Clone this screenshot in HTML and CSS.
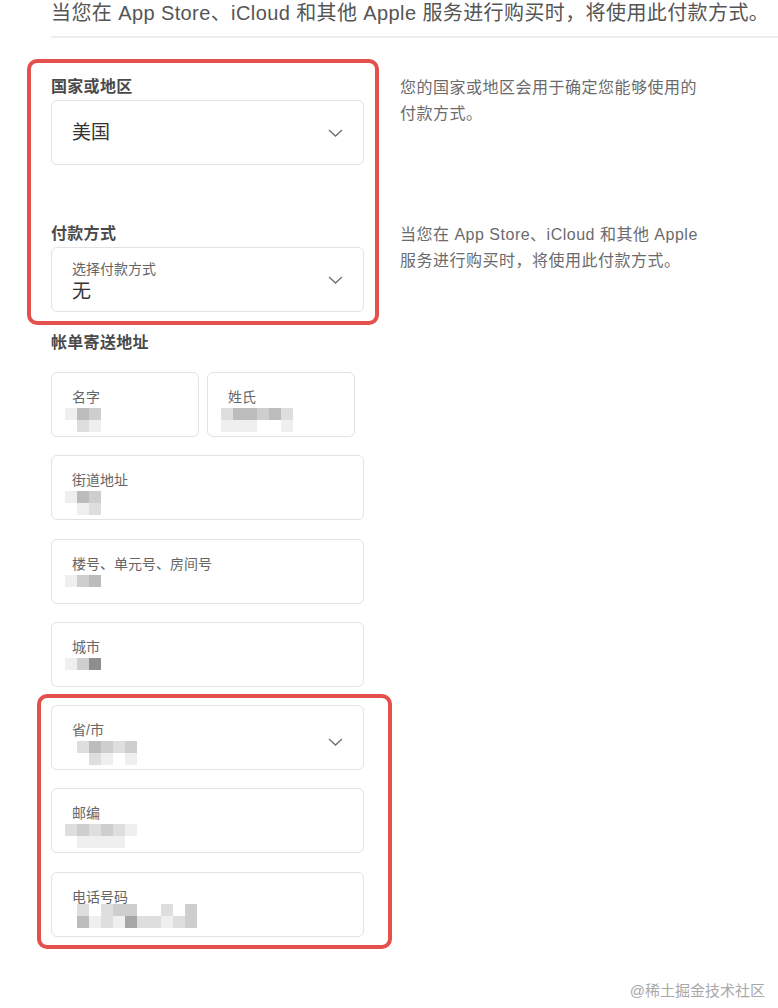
FILE: index.html
```html
<!DOCTYPE html>
<html>
<head>
  <meta charset="utf-8">
  <title>付款方式</title>
  <link rel="stylesheet" href="styles.css">
</head>
<body>
  <div class="page">
    <p class="intro">当您在 App Store、iCloud 和其他 Apple 服务进行购买时，将使用此付款方式。</p>
    <hr class="rule">

    <div class="pair">
      <div class="field-col">
        <h3 class="label">国家或地区</h3>
        <div class="box select">
          <span class="value-lg">美国</span>
          <svg class="chev" width="15" height="8" viewBox="0 0 15 8"><polyline points="1,1 7.5,7 14,1"/></svg>
        </div>
      </div>
      <p class="note">您的国家或地区会用于确定您能够使用的付款方式。</p>
    </div>

    <div class="pair pay">
      <div class="field-col">
        <h3 class="label">付款方式</h3>
        <div class="box select">
          <div class="stack">
            <span class="small">选择付款方式</span>
            <span class="value-lg">无</span>
          </div>
          <svg class="chev" width="15" height="8" viewBox="0 0 15 8"><polyline points="1,1 7.5,7 14,1"/></svg>
        </div>
      </div>
      <p class="note">当您在 App Store、iCloud 和其他 Apple 服务进行购买时，将使用此付款方式。</p>
    </div>

    <h3 class="label billing">帐单寄送地址</h3>
    <div class="fields">
      <div class="name-row">
        <div class="box input">
          <span class="small">名字</span>
          <div class="mosaic">
            <div class="mrow"><i class="c1"></i><i class="c4"></i><i class="c3"></i></div>
            <div class="mrow"><i></i><i class="c2"></i><i class="c1"></i></div>
          </div>
        </div>
        <div class="box input">
          <span class="small">姓氏</span>
          <div class="mosaic">
            <div class="mrow"><i class="c2"></i><i class="c4"></i><i class="c4"></i><i class="c3"></i><i class="c4"></i><i class="c2"></i></div>
            <div class="mrow"><i class="c1"></i><i class="c1"></i><i class="c1"></i><i></i><i></i><i class="c1"></i></div>
          </div>
        </div>
      </div>

      <div class="box input">
        <span class="small">街道地址</span>
        <div class="mosaic">
          <div class="mrow"><i class="c1"></i><i class="c4"></i><i class="c3"></i></div>
          <div class="mrow"><i></i><i class="c1"></i><i class="c2"></i></div>
        </div>
      </div>

      <div class="box input">
        <span class="small">楼号、单元号、房间号</span>
        <div class="mosaic">
          <div class="mrow"><i class="c1"></i><i class="c3"></i><i class="c4"></i></div>
        </div>
      </div>

      <div class="box input">
        <span class="small">城市</span>
        <div class="mosaic">
          <div class="mrow"><i class="c1"></i><i class="c3"></i><i class="c6"></i></div>
        </div>
      </div>

      <div class="box input has-chev">
        <div class="stack">
          <span class="small">省/市</span>
          <div class="mosaic">
            <div class="mrow"><i></i><i class="c2"></i><i class="c4"></i><i class="c3"></i><i class="c2"></i><i class="c3"></i></div>
            <div class="mrow"><i></i><i></i><i class="c2"></i><i class="c1"></i><i></i><i class="c1"></i></div>
          </div>
        </div>
        <svg class="chev" width="15" height="8" viewBox="0 0 15 8"><polyline points="1,1 7.5,7 14,1"/></svg>
      </div>

      <div class="box input">
        <span class="small">邮编</span>
        <div class="mosaic">
          <div class="mrow"><i class="c2"></i><i class="c3"></i><i class="c2"></i><i class="c3"></i><i class="c2"></i><i class="c1"></i></div>
          <div class="mrow"><i></i><i class="c1"></i><i class="c1"></i><i class="c1"></i><i class="c1"></i></div>
        </div>
      </div>

      <div class="box input">
        <span class="small">电话号码</span>
        <div class="mosaic tight">
          <div class="mrow"><i></i><i class="c2"></i><i></i><i class="c2"></i><i class="c3"></i><i class="c3"></i><i></i><i></i><i class="c2"></i><i></i><i class="c3"></i></div>
          <div class="mrow"><i></i><i class="c4"></i><i class="c1"></i><i class="c2"></i><i class="c1"></i><i class="c5"></i><i class="c2"></i><i class="c2"></i><i class="c1"></i><i class="c2"></i><i class="c3"></i></div>
        </div>
      </div>
    </div>

    <div class="watermark">@稀土掘金技术社区</div>

    <!-- annotation outlines drawn over the form -->
    <div class="mark mark-top"></div>
    <div class="mark mark-bottom"></div>
  </div>
</body>
</html>
```

FILE: styles.css
```css
body {
  margin: 0;
  background-color: #ffffff;
  font-family: 'Liberation Sans', 'Noto Sans CJK SC', sans-serif;
  color: #333333;
}
.page {
  position: relative;
  padding-left: 51px;
  height: 1008px;
  overflow: hidden;
}
.intro {
  margin: 0;
  font-size: 20px;
  line-height: 26px;
  letter-spacing: 0.4px;
  color: #555555;
  white-space: nowrap;
}
.rule {
  margin: 10px 0 0 0;
  height: 2px;
  border: none;
  background-color: #ededed;
}
.pair {
  display: flex;
  align-items: flex-start;
  gap: 36px;
  margin-top: 39px;
}
.pair.pay {
  margin-top: 59px;
}
.field-col {
  width: 313px;
}
.label {
  margin: 0 0 3px 0;
  font-size: 16px;
  line-height: 20px;
  font-weight: 700;
  letter-spacing: 0.3px;
  color: #4a4a4a;
}
.label.billing {
  margin-top: 21px;
  margin-bottom: 19px;
}
.note {
  width: 305px;
  margin: -2px 0 0 0;
  font-size: 16px;
  line-height: 25.5px;
  letter-spacing: 0.5px;
  color: #6b6b6b;
}
.box {
  box-sizing: border-box;
  height: 65px;
  border: 1px solid #e2e2e2;
  border-radius: 6px;
  background-color: #ffffff;
}
.select {
  display: flex;
  align-items: center;
  justify-content: space-between;
  padding: 0 20px;
}
.stack {
  display: flex;
  flex-direction: column;
}
.select .stack {
  gap: 3px;
  margin-top: 3px;
}
.value-lg {
  font-size: 19px;
  line-height: 22px;
  color: #333333;
}
.small {
  font-size: 14px;
  line-height: 18px;
  color: #666666;
}
.chev {
  flex: none;
}
.chev polyline {
  fill: none;
  stroke: #6e6e6e;
  stroke-width: 1.3;
}
.fields {
  display: flex;
  flex-direction: column;
  gap: 18.3px;
  width: 313px;
}
.name-row {
  display: grid;
  grid-template-columns: 1fr 1fr;
  gap: 8px;
  width: 304px;
}
.input {
  padding: 15px 20px 0 20px;
  display: flex;
  flex-direction: column;
}
.input.has-chev {
  flex-direction: row;
  align-items: flex-start;
  justify-content: space-between;
}
.input.has-chev .chev {
  margin-top: 17px;
}
.mosaic {
  margin: 2px 0 0 -7px;
  display: flex;
  flex-direction: column;
}
.mosaic.tight {
  margin-top: -2px;
}
.mrow {
  display: flex;
}
.mrow i {
  display: block;
  width: 12px;
  height: 12px;
}
.mrow i.c1 { background-color: #efefef; }
.mrow i.c2 { background-color: #dedede; }
.mrow i.c3 { background-color: #cecece; }
.mrow i.c4 { background-color: #bcbcbc; }
.mrow i.c5 { background-color: #a6a6a6; }
.mrow i.c6 { background-color: #8e8e8e; }
.watermark {
  margin-top: 44px;
  padding-right: 13px;
  text-align: right;
  font-size: 15px;
  line-height: 20px;
  color: #a8a8a8;
}
.mark {
  position: absolute;
  box-sizing: border-box;
  border: 4px solid #e4504c;
  border-radius: 10px;
}
.mark-top {
  left: 27px;
  top: 59px;
  width: 352px;
  height: 266px;
}
.mark-bottom {
  left: 37px;
  top: 694px;
  width: 355px;
  height: 255px;
}
```
